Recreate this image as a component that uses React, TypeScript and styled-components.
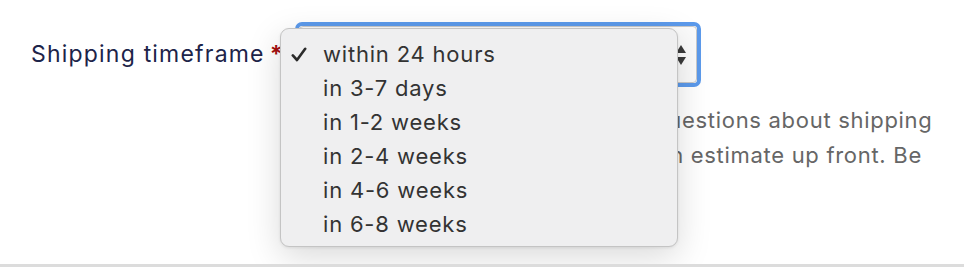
import styled, { createGlobalStyle } from "styled-components";

const GlobalStyle = createGlobalStyle`
  html, body {
    margin: 0;
    padding: 0;
    background: #ffffff;
  }
  body {
    font-family: "Inter", "Liberation Sans", sans-serif;
  }
`;

const options = [
  "within 24 hours",
  "in 3-7 days",
  "in 1-2 weeks",
  "in 2-4 weeks",
  "in 4-6 weeks",
  "in 6-8 weeks",
];

export default function App() {
  const selected = 0;

  return (
    <Page>
      <GlobalStyle />
      <FormRow>
        <Label>
          Shipping timeframe<Required>*</Required>
        </Label>
        <Field>
          <FocusRing>
            <Select>
              <Arrows width="12" height="24" viewBox="0 0 12 24">
                <path d="M6 2 L11 10 L1 10 Z" fill="#3a3a3a" />
                <path d="M6 22 L11 14 L1 14 Z" fill="#3a3a3a" />
              </Arrows>
            </Select>
          </FocusRing>
          <Help>
            Shoppers often reach out with questions about shipping
            <br />
            times, so it helps to offer them an estimate up front. Be
          </Help>
          <Menu>
            {options.map((opt, i) => (
              <Option key={opt}>
                <Check>
                  {i === selected && (
                    <svg width="16" height="15" viewBox="0 0 16 15">
                      <path
                        d="M1.8 8.4 L6 13 L14.2 1.8"
                        fill="none"
                        stroke="#2b2b2b"
                        strokeWidth="2.6"
                        strokeLinecap="round"
                        strokeLinejoin="round"
                      />
                    </svg>
                  )}
                </Check>
                {opt}
              </Option>
            ))}
          </Menu>
        </Field>
      </FormRow>
    </Page>
  );
}

const Page = styled.div`
  height: 267px;
  border-bottom: 3px solid #dcdcdc;
  padding: 22px 0 0 31px;
  box-sizing: border-box;
  overflow: hidden;
`;

const FormRow = styled.div`
  display: flex;
  align-items: flex-start;
`;

const Label = styled.div`
  width: 264px;
  padding-top: 18px;
  font-size: 23px;
  letter-spacing: 1.2px;
  line-height: 28px;
  color: #1d2449;
  white-space: nowrap;
`;

const Required = styled.span`
  color: #a50e0e;
  font-weight: 700;
  margin-left: 5px;
`;

const Field = styled.div`
  position: relative;
  display: flex;
  flex-direction: column;
`;

const FocusRing = styled.div`
  width: 406px;
  height: 65px;
  box-sizing: border-box;
  border: 4px solid #5c9aeb;
  border-radius: 7px;
`;

const Select = styled.div`
  height: 100%;
  box-sizing: border-box;
  border: 1px solid #c9c9c9;
  border-radius: 4px;
  background: #fbfbfb;
  display: flex;
  align-items: center;
  justify-content: flex-end;
  padding-right: 9px;
`;

const Arrows = styled.svg`
  display: block;
`;

const Help = styled.div`
  margin-top: 16px;
  padding-left: 18px;
  font-size: 22px;
  letter-spacing: 0.7px;
  line-height: 35px;
  color: #666666;
  white-space: nowrap;
`;

const Menu = styled.div`
  position: absolute;
  left: -15px;
  top: 6px;
  width: 398px;
  height: 219px;
  box-sizing: border-box;
  padding: 8px 0 7px;
  background: #efeff0;
  border: 1px solid #c4c4c4;
  border-radius: 9px;
  box-shadow: 0 10px 34px rgba(0, 0, 0, 0.15), 0 1px 3px rgba(0, 0, 0, 0.08);
`;

const Option = styled.div`
  display: flex;
  align-items: center;
  height: 34px;
  padding-left: 10px;
  font-size: 22px;
  letter-spacing: 0.8px;
  color: #333333;
  white-space: nowrap;
`;

const Check = styled.span`
  width: 32px;
  display: flex;
  align-items: center;
`;
